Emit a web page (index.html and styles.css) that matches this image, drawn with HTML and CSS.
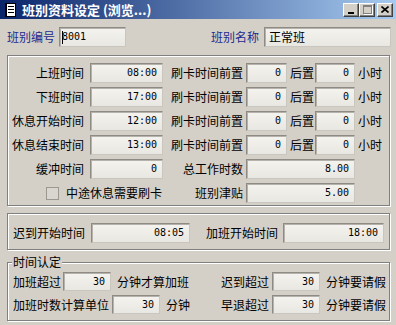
FILE: index.html
```html
<!DOCTYPE html>
<html lang="zh-CN">
<head>
  <meta charset="UTF-8">
  <title>班别资料设定</title>
  <link rel="stylesheet" href="styles.css">
</head>
<body>
  <div class="window">
    <div class="titlebar">
      <svg class="title-icon" width="12" height="14" viewBox="0 0 12 14">
        <rect x="1.5" y="0.5" width="10" height="13" fill="#fff" stroke="#000"/>
        <rect x="1" y="0" width="2" height="14" fill="#000"/>
        <rect x="4" y="3" width="6" height="1" fill="#000"/>
        <rect x="4" y="6" width="6" height="1" fill="#000"/>
        <rect x="4" y="9" width="6" height="1" fill="#000"/>
      </svg>
      <span class="title-text">班别资料设定 (浏览...)</span>
      <div class="caption-buttons">
        <span class="cap-btn"><span class="min-bar"></span></span>
        <span class="cap-btn"><span class="max-box"></span></span>
        <span class="cap-btn close-btn">
          <svg width="8" height="7" viewBox="0 0 8 7">
            <path d="M0.5 0.5 L7.5 6.5 M7.5 0.5 L0.5 6.5" stroke="#000" stroke-width="1.6"/>
          </svg>
        </span>
      </div>
    </div>

    <div class="head-row">
      <span class="head-label">班别编号</span>
      <span class="field code-field"><span class="caret"></span><span class="mono">8001</span></span>
      <span class="head-label name-label">班别名称</span>
      <span class="field name-field">正常班</span>
    </div>

    <div class="group main-group">
      <div class="row">
        <span class="lbl-a">上班时间</span>
        <span class="field num w73">08:00</span>
        <span class="lbl-b">刷卡时间前置</span>
        <span class="field num w41">0</span>
        <span class="lbl-c">后置</span>
        <span class="field num w40">0</span>
        <span class="lbl-d">小时</span>
      </div>
      <div class="row">
        <span class="lbl-a">下班时间</span>
        <span class="field num w73">17:00</span>
        <span class="lbl-b">刷卡时间前置</span>
        <span class="field num w41">0</span>
        <span class="lbl-c">后置</span>
        <span class="field num w40">0</span>
        <span class="lbl-d">小时</span>
      </div>
      <div class="row">
        <span class="lbl-a">休息开始时间</span>
        <span class="field num w73">12:00</span>
        <span class="lbl-b">刷卡时间前置</span>
        <span class="field num w41">0</span>
        <span class="lbl-c">后置</span>
        <span class="field num w40">0</span>
        <span class="lbl-d">小时</span>
      </div>
      <div class="row">
        <span class="lbl-a">休息结束时间</span>
        <span class="field num w73">13:00</span>
        <span class="lbl-b">刷卡时间前置</span>
        <span class="field num w41">0</span>
        <span class="lbl-c">后置</span>
        <span class="field num w40">0</span>
        <span class="lbl-d">小时</span>
      </div>
      <div class="row">
        <span class="lbl-a">缓冲时间</span>
        <span class="field num w73">0</span>
        <span class="lbl-b">总工作时数</span>
        <span class="field num w109">8.00</span>
      </div>
      <div class="row">
        <span class="check-cell"><span class="checkbox"></span>中途休息需要刷卡</span>
        <span class="lbl-b">班别津贴</span>
        <span class="field num w109">5.00</span>
      </div>
    </div>

    <div class="group late-group">
      <div class="row">
        <span class="lbl-late">迟到开始时间</span>
        <span class="field num w99">08:05</span>
        <span class="lbl-ot">加班开始时间</span>
        <span class="field num w101">18:00</span>
      </div>
    </div>

    <div class="group rule-group">
      <span class="legend">时间认定</span>
      <div class="rule-row">
        <div class="rule-left">
          <span class="lbl-r1">加班超过</span>
          <span class="field num w48">30</span>
          <span>分钟才算加班</span>
        </div>
        <div class="rule-right">
          <span class="lbl-r">迟到超过</span>
          <span class="field num w48">30</span>
          <span>分钟要请假</span>
        </div>
      </div>
      <div class="rule-row">
        <div class="rule-left">
          <span class="lbl-r2">加班时数计算单位</span>
          <span class="field num w48">30</span>
          <span>分钟</span>
        </div>
        <div class="rule-right">
          <span class="lbl-r">早退超过</span>
          <span class="field num w48">30</span>
          <span>分钟要请假</span>
        </div>
      </div>
    </div>
  </div>
</body>
</html>
```

FILE: styles.css
```css
body { margin: 0; background: #d4d0c8; font-family: "Noto Sans CJK SC", "Noto Sans", sans-serif; font-size: 12px; line-height: 12px; color: #000; }
.window { width: 396px; height: 325px; overflow: hidden; display: flex; flex-direction: column; }

/* title bar */
.titlebar { height: 19px; flex: none; display: flex; align-items: center; padding: 0 3px 0 4px; background: linear-gradient(to right, #0a246a, #a6caf0); }
.title-icon { flex: none; margin-right: 6px; }
.title-text { color: #fff; font-weight: bold; font-size: 13px; line-height: 13px; }
.caption-buttons { margin-left: auto; display: flex; }
.cap-btn { width: 16px; height: 14px; box-sizing: border-box; background: #d4d0c8; border: 1px solid; border-color: #fff #404040 #404040 #fff; box-shadow: inset -1px -1px 0 #808080; display: flex; align-items: center; justify-content: center; position: relative; }
.close-btn { margin-left: 2px; }
.min-bar { position: absolute; left: 4px; top: 8px; width: 6px; height: 2px; background: #000; }
.max-box { width: 7px; height: 6px; border: 1px solid #808080; border-top-width: 2px; box-shadow: 1px 1px 0 #fff; margin-top: -1px; }

/* fields */
.field { height: 20px; box-sizing: border-box; display: flex; align-items: center; border: 1px solid; border-color: #8e8b84 #c9c6bf #c9c6bf #8e8b84; box-shadow: inset 1px 1px 0 #b5b2ab; background: linear-gradient(#f4f3ef, #e9e7e1); padding: 0 3px; }
.num, .mono { font-family: "DejaVu Sans Mono", "Liberation Mono", monospace; font-size: 10px; }
.num { justify-content: flex-end; padding-right: 5px; }
.caret { width: 1px; height: 13px; background: #000; margin-right: -1px; }

.head-row { display: flex; align-items: center; height: 20px; margin-top: 8px; padding-left: 7px; flex: none; }
.head-label { color: #1c2b8f; width: 48px; margin-right: 4px; }
.code-field { width: 67px; padding-left: 2px; }
.name-label { margin-left: 85px; margin-right: 5px; }
.name-field { width: 127px; padding-left: 4px; }

/* groups */
.group { position: relative; flex: none; margin-left: 7px; width: 383px; box-sizing: border-box; border: 1px solid #808080; box-shadow: inset 1px 1px 0 #fff, 1px 1px 0 #fff; }
.main-group { margin-top: 8px; padding: 7px 0 2px 1px; display: flex; flex-direction: column; gap: 4px; }
.row { display: flex; align-items: center; height: 20px; }
.lbl-a { width: 75px; margin-right: 6px; text-align: right; }
.lbl-b { width: 72px; margin-right: 3px; text-align: right; }
.lbl-c { width: 24px; margin-right: 1px; }
.lbl-d { margin-left: 3px; }
.w73 { width: 73px; margin-right: 8px; }
.w41 { width: 41px; margin-right: 3px; }
.w40 { width: 40px; }
.w109 { width: 109px; }
.check-cell { width: 162px; box-sizing: border-box; padding-left: 37px; display: flex; align-items: center; }
.checkbox { width: 13px; height: 13px; box-sizing: border-box; border: 1px solid #9c9891; background: #d9d6cf; margin-right: 7px; }

.late-group { margin-top: 7px; padding: 9px 0 6px 5px; }
.lbl-late { width: 72px; margin-right: 6px; }
.w99 { width: 99px; margin-right: 16px; }
.lbl-ot { width: 72px; margin-right: 5px; }
.w101 { width: 101px; }

.rule-group { margin-top: 12px; padding: 9px 0 6px 5px; display: flex; flex-direction: column; gap: 4px; }
.legend { position: absolute; left: 4px; top: -7px; padding: 0 1px; background: #d4d0c8; }
.rule-row { display: flex; align-items: center; height: 19px; }
.rule-row .field { height: 19px; }
.rule-left { width: 208px; display: flex; align-items: center; }
.rule-right { display: flex; align-items: center; }
.lbl-r1 { width: 48px; margin-right: 2px; }
.lbl-r2 { width: 96px; margin-right: 3px; }
.lbl-r { width: 48px; margin-right: 3px; }
.w48 { width: 48px; margin-right: 6px; }
```
